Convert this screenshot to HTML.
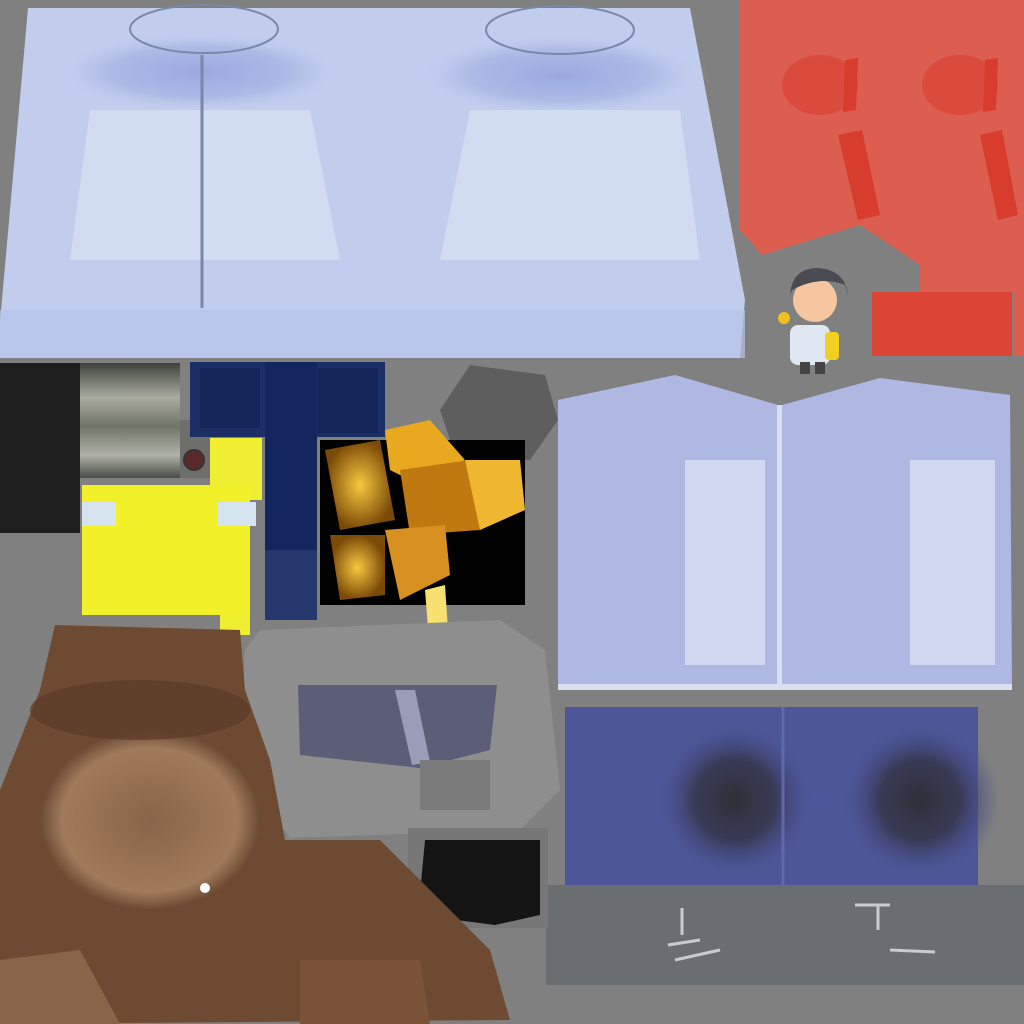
<!DOCTYPE html>
<html><head><meta charset="utf-8"><style>html,body{margin:0;padding:0;background:#808080;width:1024px;height:1024px;overflow:hidden}</style></head>
<body>
<svg width="1024" height="1024" viewBox="0 0 1024 1024" xmlns="http://www.w3.org/2000/svg">
<defs>
<radialGradient id="b1" cx="0.5" cy="0.5" r="0.5"><stop offset="0" stop-color="#9aa8e0"/><stop offset="0.6" stop-color="#a8b4e4" stop-opacity="0.8"/><stop offset="1" stop-color="#c5d0ee" stop-opacity="0"/></radialGradient>
<linearGradient id="cyl" x1="0" y1="0" x2="0" y2="1"><stop offset="0" stop-color="#3e423c"/><stop offset="0.3" stop-color="#a9ab9f"/><stop offset="0.55" stop-color="#6f7566"/><stop offset="0.8" stop-color="#b0b2a8"/><stop offset="1" stop-color="#4a4d46"/></linearGradient>
<radialGradient id="dk" cx="0.5" cy="0.5" r="0.5"><stop offset="0" stop-color="#303038"/><stop offset="0.5" stop-color="#383a55"/><stop offset="1" stop-color="#4d559a" stop-opacity="0"/></radialGradient>
<radialGradient id="br" cx="0.5" cy="0.5" r="0.5"><stop offset="0" stop-color="#8a6448"/><stop offset="0.8" stop-color="#a07a5a"/><stop offset="1" stop-color="#6b4a34"/></radialGradient>
<radialGradient id="gold" cx="0.5" cy="0.5" r="0.5"><stop offset="0" stop-color="#f8c840"/><stop offset="1" stop-color="#7a4a08"/></radialGradient>
</defs>
<rect width="1024" height="1024" fill="#808080"/>
<polygon points="28,8 690,8 745,300 740,358 0,358 0,322" fill="#c2cdee"/>
<ellipse cx="200" cy="72" rx="150" ry="42" fill="url(#b1)"/>
<ellipse cx="560" cy="75" rx="150" ry="42" fill="url(#b1)"/>
<polygon points="90,110 310,110 340,260 70,260" fill="#d2dcf0"/>
<polygon points="470,110 680,110 700,260 440,260" fill="#d2dcf0"/>
<ellipse cx="204" cy="29" rx="74" ry="24" fill="none" stroke="#7888a8" stroke-width="2"/>
<ellipse cx="560" cy="30" rx="74" ry="24" fill="none" stroke="#7888a8" stroke-width="2"/>
<line x1="202" y1="55" x2="202" y2="308" stroke="#7888a8" stroke-width="3"/>
<rect x="0" y="310" width="745" height="48" fill="#b6c2ea" opacity="0.7"/>
<polygon points="740,0 1024,0 1024,355 1013,355 1013,292 920,292 920,265 860,225 762,255 740,230" fill="#dc5e50"/>
<rect x="872" y="292" width="140" height="64" fill="#dc4535"/>
<ellipse cx="820" cy="85" rx="38" ry="30" fill="#d84030" opacity="0.6"/>
<ellipse cx="960" cy="85" rx="38" ry="30" fill="#d84030" opacity="0.6"/>
<polygon points="838,135 862,130 880,215 858,220" fill="#d83c2c"/>
<polygon points="980,135 1002,130 1018,215 998,220" fill="#d83c2c"/>
<polygon points="845,60 858,58 856,110 843,112" fill="#d83c2c"/>
<polygon points="985,60 998,58 996,110 983,112" fill="#d83c2c"/>
<rect x="790" y="325" width="40" height="40" rx="8" fill="#dfe8f2"/>
<circle cx="815" cy="300" r="22" fill="#f5c6a0"/>
<path d="M790 295 Q792 268 818 268 Q845 270 848 295 L845 285 Q820 275 792 290Z" fill="#4a4a52"/>
<rect x="825" y="332" width="14" height="28" rx="4" fill="#f0d020"/>
<circle cx="784" cy="318" r="6" fill="#f0c020"/>
<rect x="800" y="362" width="10" height="12" fill="#444"/><rect x="815" y="362" width="10" height="12" fill="#444"/>
<rect x="0" y="363" width="80" height="170" fill="#1e1e1e"/>
<rect x="80" y="363" width="100" height="115" fill="url(#cyl)"/>
<rect x="180" y="420" width="30" height="58" fill="#6e6e6a"/>
<circle cx="194" cy="460" r="10" fill="#5a2a2a" stroke="#333" stroke-width="2"/>
<polygon points="210,438 262,438 262,500 250,500 250,635 220,635 220,615 82,615 82,485 210,485" fill="#f0ee30"/>
<rect x="82" y="485" width="168" height="130" fill="#f2f028"/>
<rect x="82" y="502" width="34" height="24" fill="#d6e4f0"/>
<rect x="218" y="502" width="38" height="24" fill="#d6e4f0"/>
<rect x="190" y="362" width="195" height="75" fill="#1c2e66"/>
<rect x="200" y="368" width="60" height="60" fill="#14255a"/>
<rect x="318" y="368" width="60" height="65" fill="#14255a"/>
<rect x="265" y="362" width="52" height="258" fill="#13275e"/>
<rect x="265" y="550" width="52" height="70" fill="#24386e"/>
<polygon points="470,365 545,375 558,420 530,460 455,455 440,410" fill="#5e5e5e"/>
<rect x="320" y="440" width="205" height="165" fill="#000"/>
<polygon points="385,430 430,420 465,460 420,485 390,470" fill="#e8a820"/>
<polygon points="325,450 380,440 395,520 340,530" fill="url(#gold)"/>
<polygon points="400,470 470,460 480,530 410,535" fill="#c07810"/>
<polygon points="465,460 520,460 525,510 480,530" fill="#f0b830"/>
<polygon points="330,535 385,535 385,595 340,600" fill="url(#gold)"/>
<polygon points="385,530 445,525 450,575 400,600" fill="#d89020"/>
<polygon points="425,590 445,585 448,630 428,628" fill="#f8e070"/>
<polygon points="558,400 675,375 778,405 778,690 558,690" fill="#aeb8e2"/>
<polygon points="782,405 880,378 1010,395 1012,690 782,690" fill="#aeb8e2"/>
<rect x="685" y="460" width="80" height="205" fill="#cfd8f0"/>
<rect x="910" y="460" width="85" height="205" fill="#cfd8f0"/>
<rect x="558" y="684" width="454" height="6" fill="#d8e0f0"/>
<rect x="777" y="405" width="5" height="285" fill="#d8e0f0"/>
<rect x="565" y="707" width="413" height="183" fill="#4d5699"/>
<ellipse cx="735" cy="800" rx="80" ry="80" fill="url(#dk)"/>
<ellipse cx="920" cy="800" rx="80" ry="80" fill="url(#dk)"/>
<line x1="783" y1="707" x2="783" y2="890" stroke="#5f68aa" stroke-width="3"/>
<rect x="546" y="885" width="478" height="100" fill="#6a6d71"/>
<path d="M682 908 L682 935 M668 945 L700 940 M675 960 L720 950" stroke="#c8ccd0" stroke-width="3"/>
<path d="M855 905 L890 905 M878 905 L878 930 M890 950 L935 952" stroke="#c8ccd0" stroke-width="3"/>
<polygon points="260,630 500,620 545,650 560,790 520,830 290,838 240,770 245,650" fill="#8e8e8e"/>
<polygon points="298,685 497,685 490,750 420,768 300,755" fill="#5c5e78"/>
<polygon points="395,690 415,690 430,762 412,765" fill="#9a9cb8"/>
<rect x="420" y="760" width="70" height="50" fill="#7a7a7a"/>
<rect x="408" y="828" width="140" height="100" fill="#777"/>
<polygon points="425,840 540,840 540,915 495,925 418,915" fill="#141414"/>
<polygon points="55,625 240,630 245,690 270,760 285,840 380,840 420,880 490,950 510,1020 0,1024 0,790 40,690" fill="#6e4a32"/>
<ellipse cx="150" cy="820" rx="110" ry="90" fill="url(#br)"/>
<ellipse cx="140" cy="710" rx="110" ry="30" fill="#5a3a26" opacity="0.7"/>
<polygon points="0,960 80,950 120,1024 0,1024" fill="#8a6448"/>
<polygon points="300,960 420,960 430,1024 300,1024" fill="#7a5238"/>
<circle cx="205" cy="888" r="5" fill="#fff"/>
</svg>
</body></html>
